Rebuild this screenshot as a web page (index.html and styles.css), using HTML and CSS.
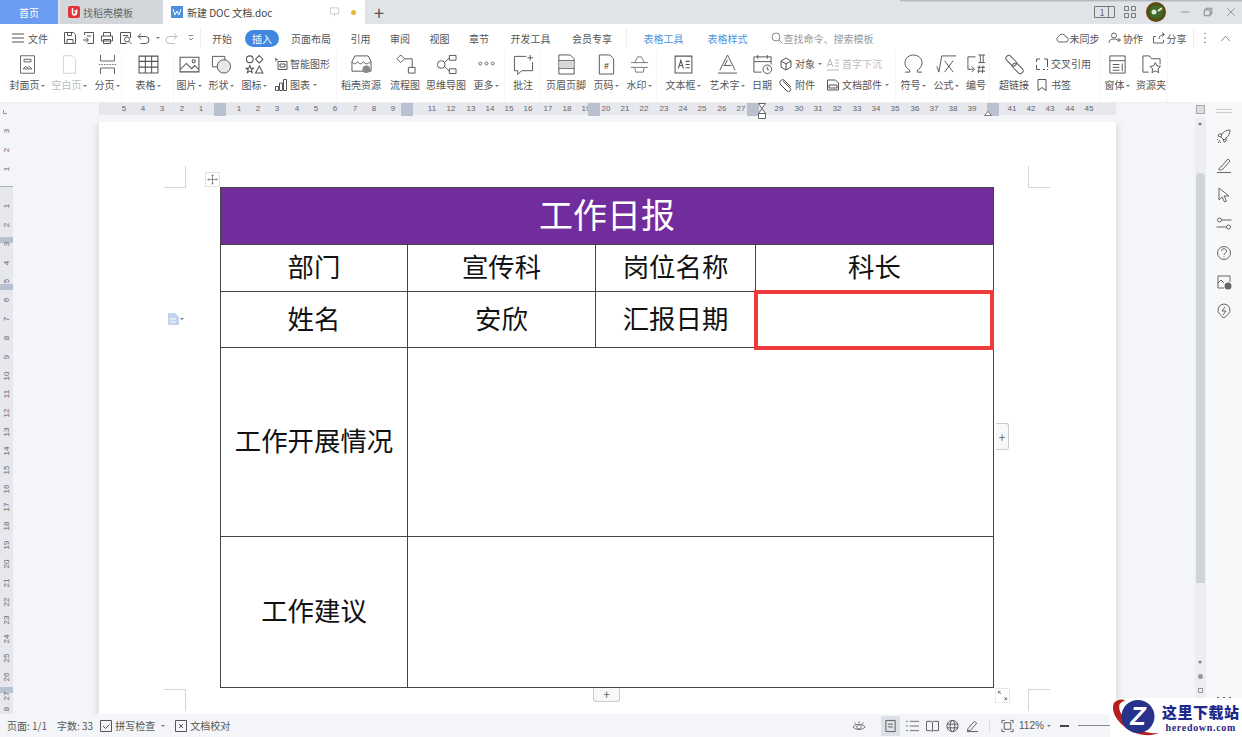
FILE: index.html
```html
<!DOCTYPE html>
<html lang="zh-CN">
<head>
    <meta charset="UTF-8">
    <title>新建 DOC 文档.doc</title>
    <link rel="stylesheet" href="styles.css">
</head>
<body>
    <div class="app">
        <header class="tabbar">
            <div class="tab tab-home">首页</div>
            <div class="tab tab-tpl">
                <svg class="tab-logo" viewBox="0 0 12 12"><rect width="12" height="12" rx="2" fill="#e5323c"/><path d="M4.5 2v5a2 2 0 1 0 2-2M8.5 3.5c.6 2-.2 4-2 5" fill="none" stroke="#fff" stroke-width="1.5"/></svg>
                找稻壳模板
            </div>
            <div class="tab tab-doc">
                <svg class="tab-logo" viewBox="0 0 12 12"><rect width="12" height="12" fill="#4a8fe0"/><path d="M2 3l2 6 2-4 2 4 2-6" fill="none" stroke="#fff" stroke-width="1"/></svg>
                <span>新建 DOC 文档.doc</span>
                <svg class="tab-screen" viewBox="0 0 12 12"><path d="M1.5 1.5h9v6.5h-9zM6 8v2.500" fill="none" stroke="#c4c8cc"/></svg>
                <i class="dot"></i>
            </div>
            <div class="tab-add">+</div>
            <div class="win">
                <svg class="win-book" viewBox="0 0 21 12"><path d="M.5.5h20v11H.5zM14.5.5v11" fill="none" stroke="#777"/><text x="8" y="10" font-size="9" fill="#666" text-anchor="middle">1</text></svg>
                <svg class="win-ico" viewBox="0 0 12 12"><path d="M.5.5h4v4h-4zM7.5.5h4v4h-4zM.5 7.5h4v4h-4zM7.5 7.5h4v4h-4z" fill="none" stroke="#777"/></svg>
                <svg class="win-avatar" viewBox="0 0 20 20"><circle cx="10" cy="10" r="10" fill="#5a4a0c"/><circle cx="10" cy="10" r="7" fill="#3d6b2c"/><circle cx="8" cy="10" r="2.5" fill="#dfe8cf"/><path d="M12 9l4-3" stroke="#e8edd8" stroke-width="2"/></svg>
                <svg class="win-ctl" viewBox="0 0 12 12"><path d="M1 6h10" stroke="#888"/></svg>
                <svg class="win-ctl" viewBox="0 0 12 12"><path d="M1.5 3.5h7v7h-7zM3.5 3.5v-2h7v7h-2" fill="none" stroke="#777"/></svg>
                <svg class="win-ctl" viewBox="0 0 12 12"><path d="M1.5 1.5l9 9M10.5 1.5l-9 9" stroke="#888"/></svg>
            </div>
            <i class="top-shadow"></i>
        </header>

        <nav class="menubar">
            <div class="menu-file">
                <svg class="mi" viewBox="0 0 12 10"><path d="M0 1h12M0 5h12M0 9h12" stroke="#555"/></svg>
                <span>文件</span>
            </div>
            <div class="quick">
                <svg viewBox="0 0 14 14"><path d="M1.5 1.5h9l2 2v9h-11zM4 12.500v-4h6v4M4.500 1.5v3h4v-3" fill="none" stroke="#555"/></svg>
                <svg viewBox="0 0 14 14"><path d="M2.500 4v-2.500h9v11h-6M1 9h5M4 6.500l2.500 2.500-2.500 2.500M5 5h4" fill="none" stroke="#555"/></svg>
                <svg viewBox="0 0 14 14"><path d="M3.500 5v-3.500h7v3.500M1.500 10v-5h11v5zM3.500 8.500h7v4h-7z" fill="none" stroke="#555"/></svg>
                <svg viewBox="0 0 14 14"><path d="M11.500 7v-5.500h-10v11h6M4 4.500h5" fill="none" stroke="#555"/><circle cx="8" cy="8.500" r="2.500" fill="none" stroke="#555"/><path d="M10 10.500l2.500 2.500" stroke="#555"/></svg>
                <svg viewBox="0 0 14 14"><path d="M1.500 5.500h7a3.500 3.500 0 0 1 0 7h-5M4 2.500l-3 3 3 3" fill="none" stroke="#555"/></svg>
                <i class="caret"></i>
                <svg viewBox="0 0 14 14"><path d="M12.500 5.500h-7a3.500 3.500 0 0 0 0 7h5M10 2.500l3 3-3 3" fill="none" stroke="#bbb"/></svg>
                <svg class="small" viewBox="0 0 10 10"><path d="M2 2h6M2.500 5l2.500 2.500 2.500-2.500" fill="none" stroke="#666"/></svg>
            </div>
            <div class="menu-items">
                <span class="mitem">开始</span>
                <span class="mitem active">插入</span>
                <span class="mitem">页面布局</span>
                <span class="mitem">引用</span>
                <span class="mitem">审阅</span>
                <span class="mitem">视图</span>
                <span class="mitem">章节</span>
                <span class="mitem wide">开发工具</span>
                <span class="mitem wide">会员专享</span>
                <i class="msep"></i>
                <span class="mitem ctx">表格工具</span>
                <span class="mitem ctx">表格样式</span>
                <span class="search">
                    <svg viewBox="0 0 12 12"><circle cx="5" cy="5" r="4" fill="none" stroke="#888"/><path d="M8 8l3.500 3.500" stroke="#888"/></svg>
                    查找命令、搜索模板
                </span>
            </div>
            <div class="menu-right">
                <span class="mr"><svg viewBox="0 0 14 12"><path d="M4 10h6.500a2.500 2.500 0 0 0 .5-5 4 4 0 0 0-7.500-.5A3 3 0 0 0 4 10z" fill="none" stroke="#666"/></svg>未同步</span>
                <span class="mr"><svg viewBox="0 0 14 12"><circle cx="6" cy="3.500" r="2.500" fill="none" stroke="#666"/><path d="M1 11c0-3 2-4 5-4s4 1 4 2M11 6v4M9 8h4" fill="none" stroke="#666"/></svg>协作</span>
                <span class="mr"><svg viewBox="0 0 14 12"><path d="M4 4.500h-2.500v6.500h10v-3M7 7c0-3 2-4.500 5-4.500M10 .5l2.500 2-2.500 2" fill="none" stroke="#666"/></svg>分享</span>
                <i class="msep right"></i>
                <svg class="mr-dots" viewBox="0 0 4 12"><path d="M2 1v1M2 5.500v1M2 10v1" stroke="#666" stroke-width="1.5"/></svg>
                <svg class="mr-up" viewBox="0 0 12 8"><path d="M1 7l5-5.500 5 5.500" fill="none" stroke="#777"/></svg>
            </div>
        </nav>

        <section class="ribbon">
            <div class="rgroup">
                <div class="rbtn w-cover"><svg viewBox="0 0 22 24"><path d="M3 2h16v20h-16zM7 6h8v3h-8zM6 17l3-3 2 2 2-2 3 3z" fill="none" stroke="#555"/></svg><span>封面页<i class="caret"></i></span></div>
                <div class="rbtn w-blank off"><svg viewBox="0 0 22 24"><path d="M4 2h10l4 4v16h-14z" fill="none" stroke="#ccc"/></svg><span>空白页<i class="caret"></i></span></div>
                <div class="rbtn w-page"><svg viewBox="0 0 22 24"><path d="M3 1v7h16v-7M3 23v-7h16v7" fill="none" stroke="#555"/><path d="M1 12h20" stroke="#777" stroke-dasharray="2 1"/></svg><span>分页<i class="caret"></i></span></div>
            </div>
            <div class="rgroup">
                <div class="rbtn w-table"><svg viewBox="0 0 20 20"><path d="M1 2h18v16h-18zM1 7h18M1 12.500h18M7 2v16M13 2v16" fill="none" stroke="#555"/></svg><span>表格<i class="caret"></i></span></div>
            </div>
            <div class="rgroup">
                <div class="rbtn w-pic"><svg viewBox="0 0 20 20"><path d="M1 3h18v14h-18zM1 15l6-6 5 5 3-3 4 4" fill="none" stroke="#555"/><circle cx="14" cy="7" r="1.5" fill="none" stroke="#555"/></svg><span>图片<i class="caret"></i></span></div>
                <div class="rbtn w-shape"><svg viewBox="0 0 22 22"><path d="M1.5 2.500h13v11h-13z" fill="none" stroke="#555"/><circle cx="13.500" cy="13" r="7" fill="#e8e8e8" stroke="#555"/></svg><span>形状<i class="caret"></i></span></div>
                <div class="rbtn w-icon"><svg viewBox="0 0 20 20"><circle cx="5.500" cy="5" r="3.200" fill="none" stroke="#555"/><path d="M14.500 1.500l3.500 3.500-3.500 3.500-3.500-3.500zM5.500 11l1 2.500h2.500l-2 1.500.8 2.700-2.300-1.500-2.300 1.500.8-2.700-2-1.500h2.500zM14.500 11.500l3.500 6.500h-7z" fill="none" stroke="#555"/></svg><span>图标<i class="caret"></i></span></div>
                <div class="rstack w-smart">
                    <div class="ritem"><svg viewBox="0 0 14 14"><path d="M1 1.500l3 1.500M2 1.500v3M4 4.500h9v8h-9zM6 7h5v3h-5z" fill="none" stroke="#555"/></svg>智能图形</div>
                    <div class="ritem"><svg viewBox="0 0 14 14"><path d="M1.5 8.500h3v4h-3zM5.500 5h3v7.500h-3zM9.500 1.500h3v11h-3z" fill="none" stroke="#555"/></svg>图表<i class="caret"></i></div>
                </div>
            </div>
            <div class="rgroup">
                <div class="rbtn w-res"><svg viewBox="0 0 22 22"><path d="M4 2h14l3 6v10h-20v-10zM1 8c2 3 4 3 6 0 2 3 4 3 6 0 2 3 4 3 8 0" fill="none" stroke="#555"/><circle cx="16" cy="16" r="4" fill="#888"/></svg><span>稻壳资源</span></div>
                <div class="rbtn w-flow"><svg viewBox="0 0 22 22"><path d="M6 1l4 4-4 4-4-4zM10 5h8v9M14 14h7v6h-7z" fill="none" stroke="#555"/></svg><span>流程图</span></div>
                <div class="rbtn w-mind"><svg viewBox="0 0 22 22"><circle cx="5.500" cy="11" r="4" fill="none" stroke="#555"/><path d="M9 9l5-5M9 13l5 5M14 1.5h7v5h-7zM14 15.500h7v5h-7z" fill="none" stroke="#555"/></svg><span>思维导图</span></div>
                <div class="rbtn w-more"><svg viewBox="0 0 22 22"><circle cx="4.500" cy="10" r="1.5" fill="none" stroke="#666"/><circle cx="11" cy="10" r="1.5" fill="none" stroke="#666"/><circle cx="17.500" cy="10" r="1.5" fill="none" stroke="#666"/></svg><span>更多<i class="caret"></i></span></div>
            </div>
            <div class="rgroup">
                <div class="rbtn w-note"><svg viewBox="0 0 22 22"><path d="M14 2.500h-12.500v15h3.500v4l4-4h11.500v-9M18 1v6M15 4h6" fill="none" stroke="#555"/></svg><span>批注</span></div>
            </div>
            <div class="rgroup">
                <div class="rbtn w-head"><svg viewBox="0 0 20 22"><path d="M2 1h12l4 4v16h-16zM2 7h16M2 15h16" fill="none" stroke="#555"/><path d="M2.500 8h15v6h-15z" fill="#d8d8d8"/></svg><span>页眉页脚</span></div>
                <div class="rbtn w-pnum"><svg viewBox="0 0 20 22"><path d="M2.500 1h11l4 4v16h-15z" fill="none" stroke="#555"/><text x="10" y="16" font-size="9" font-weight="700" fill="#555" text-anchor="middle" font-family="Liberation Sans">#</text></svg><span>页码<i class="caret"></i></span></div>
                <div class="rbtn w-mark"><svg viewBox="0 0 22 22"><path d="M2 9h18M2 14h18M6 9l3-6h4l3 6M6 14l1 5h8l1-5" fill="none" stroke="#777"/></svg><span>水印<i class="caret"></i></span></div>
            </div>
            <div class="rgroup">
                <div class="rbtn w-tbox"><svg viewBox="0 0 20 20"><path d="M2 2h16v16h-16z" fill="none" stroke="#555"/><path d="M5 14l2.500-8 2.500 8M6 11h3M12 7h4M12 10h4M12 13h4" fill="none" stroke="#555"/></svg><span>文本框<i class="caret"></i></span></div>
                <div class="rbtn w-art"><svg viewBox="0 0 22 22"><path d="M3 17l8-16 8 16M7 12h8M1 20h20M11 6l-3 6" fill="none" stroke="#555"/></svg><span>艺术字<i class="caret"></i></span></div>
                <div class="rbtn w-date"><svg viewBox="0 0 22 22"><path d="M10 19h-8v-16h18v8M2 8h18M6 1v4M16 1v4M16 13.500v3h2" fill="none" stroke="#555"/><circle cx="16" cy="16" r="4.500" fill="none" stroke="#555"/></svg><span>日期</span></div>
                <div class="rstack w-obj">
                    <div class="ritem"><svg viewBox="0 0 14 14"><path d="M7 1l5 3v6l-5 3-5-3v-6zM2 4l5 3 5-3M7 7v6" fill="none" stroke="#555"/></svg>对象<i class="caret"></i></div>
                    <div class="ritem"><svg viewBox="0 0 14 14"><path d="M4 3l7 7a2 2 0 0 1-3 3l-7-7a3 3 0 0 1 4-4l7 7" fill="none" stroke="#555"/></svg>附件</div>
                </div>
                <div class="rstack w-drop">
                    <div class="ritem off"><svg viewBox="0 0 14 14"><path d="M1 10l3-8 3 8M2 7.500h4M1 13h12M9 3h4M9 6h4M9 9h4" fill="none" stroke="#bbb"/></svg>首字下沉</div>
                    <div class="ritem"><svg viewBox="0 0 14 14"><path d="M1.5 2h8l3 3v7h-11zM3 7h8v3h-8z" fill="none" stroke="#555"/></svg>文档部件<i class="caret"></i></div>
                </div>
            </div>
            <div class="rgroup">
                <div class="rbtn w-sym"><svg viewBox="0 0 22 22"><path d="M2 19h5v-2c-3-2-5-4-5-8a9 8 0 0 1 18 0c0 4-2 6-5 8v2h5" fill="none" stroke="#555"/></svg><span>符号<i class="caret"></i></span></div>
                <div class="rbtn w-for"><svg viewBox="0 0 22 22"><path d="M1 13l2 6 3-17h15M9 7l9 12M18 7l-9 12" fill="none" stroke="#555"/></svg><span>公式<i class="caret"></i></span></div>
                <div class="rbtn w-num"><svg viewBox="0 0 22 22"><path d="M2 3h8M2 3v13h6M6 13l3 3-3 3M13 1h7M13 9h7M15 1v8M18 1v8M14 12l-1 8M18 12l-1 8M12 14h8M12 18h8" fill="none" stroke="#555"/></svg><span>编号</span></div>
            </div>
            <div class="rgroup">
                <div class="rbtn w-link"><svg viewBox="0 0 22 22"><rect x="1" y="4" width="13" height="6" rx="3" transform="rotate(45 7.500 7)" fill="none" stroke="#555"/><rect x="8" y="12" width="13" height="6" rx="3" transform="rotate(45 14.500 15)" fill="none" stroke="#555"/></svg><span>超链接</span></div>
                <div class="rstack w-ref">
                    <div class="ritem"><svg viewBox="0 0 14 14"><path d="M5 2h-3.500v3M1.5 8v4.500h3.500M9 2h3.500v8M8 12.500h2M12 12.500h1" fill="none" stroke="#555"/></svg>交叉引用</div>
                    <div class="ritem"><svg viewBox="0 0 14 14"><path d="M3 1.5h8v11l-4-3-4 3z" fill="none" stroke="#555"/></svg>书签</div>
                </div>
            </div>
            <div class="rgroup">
                <div class="rbtn w-win"><svg viewBox="0 0 20 22"><path d="M2 2h16v18h-16zM2 7h16M5 11h7M5 14h7M5 17h7M15 10v8" fill="none" stroke="#555"/></svg><span>窗体<i class="caret"></i></span></div>
                <div class="rbtn w-folder"><svg viewBox="0 0 22 22"><path d="M8 19h-6v-17h7l2 3h9v6" fill="none" stroke="#555"/><path d="M15 9l1.800 3.500 3.700.5-2.700 2.700.7 3.800-3.500-1.800-3.500 1.800.7-3.800-2.700-2.700 3.700-.5z" fill="none" stroke="#555"/></svg><span>资源夹</span></div>
            </div>
        </section>

        <div class="main-row">
            <div class="doc-col">
                <div class="hruler">
                    <span class="corner"></span>
                    <div class="ticks" id="hticks"></div>
                    <svg class="indent" viewBox="0 0 10 16"><path d="M1.500.5h7l-3.500 5zM5 5.500l-3.500 5h7zM1.500 10.500h7v5h-7z" fill="#fff" stroke="#666"/></svg>
                    <svg class="indent-r" viewBox="0 0 8 5"><path d="M4 .5l3.500 4h-7z" fill="#fff" stroke="#777"/></svg>
                </div>
                <main class="workspace">
                    <div class="vruler" id="vticks">
                        <i class="vmark vm1"></i>
                        <i class="vmark vm2"></i>
                        <i class="vmark vm3"></i>
                    </div>
                    <div class="canvas">
                        <div class="page">
                            <i class="crop crop-tl"></i>
                            <i class="crop crop-tr"></i>
                            <i class="crop crop-bl"></i>
                            <i class="crop crop-br"></i>
                            <span class="handle-move">
                                <svg viewBox="0 0 14 14"><path d="M7 1v12M1 7h12M5.500 2.500l1.500-1.500 1.500 1.500M5.500 11.500l1.500 1.500 1.500-1.500M2.500 5.500l-1.500 1.500 1.500 1.500M11.500 5.500l1.500 1.500-1.500 1.500" fill="none" stroke="#777"/></svg>
                            </span>
                            <table class="report">
                                <colgroup>
                                    <col class="c1"><col class="c2"><col class="c3"><col class="c4">
                                </colgroup>
                                <tr class="r-title"><td colspan="4">工作日报</td></tr>
                                <tr class="r-dept">
                                    <td>部门</td><td>宣传科</td><td>岗位名称</td><td>科长</td>
                                </tr>
                                <tr class="r-name">
                                    <td>姓名</td><td>安欣</td><td>汇报日期</td><td class="picked"></td>
                                </tr>
                                <tr class="r-work"><td>工作开展情况</td><td colspan="3"></td></tr>
                                <tr class="r-adv"><td>工作建议</td><td colspan="3"></td></tr>
                            </table>
                            <span class="handle-side">+</span>
                            <span class="handle-bottom">+</span>
                            <span class="handle-size">
                                <svg viewBox="0 0 12 12"><path d="M1.5 1.5l3 3M1.5 1.5v2.500M1.5 1.5h2.500M10.500 10.500l-3-3M10.500 10.500v-2.500M10.500 10.500h-2.500" fill="none" stroke="#777"/></svg>
                            </span>
                            <span class="para-mark">
                                <svg viewBox="0 0 11 12"><path d="M0 0h7l4 4v8h-11z" fill="#c3d3ec"/><path d="M2 6h6M2 9h6" stroke="#fff"/></svg>
                                <i class="caret"></i>
                            </span>
                        </div>
                    </div>
                </main>
            </div>
            <div class="vscroll">
                <span class="sbtn"></span>
                <span class="arrow"></span>
                <span class="thumb"></span>
                <span class="arrow down"></span>
                <span class="sb-dot"></span>
                <span class="sb-square"></span>
            </div>
            <aside class="sidebar">
                <i class="grip"></i>
                <svg viewBox="0 0 16 16"><path d="M6 5c2-3 5-4 8-4 0 3-1 6-4 8l-2 2-3-3zM6 5h-3l-1 2 3 1M10 9v3l-2 1-1-3M4 11l-2 3M2 10l-1 1M5 13l-1 1" fill="none" stroke="#666"/></svg>
                <svg viewBox="0 0 16 16"><path d="M1 14.500h14M3 12c0-2 1-3 2-3l7-8 2 2-7 8c-1 1-2 1-4 1z" fill="none" stroke="#666"/></svg>
                <svg viewBox="0 0 16 16"><path d="M3 1l10 8h-5l2.500 5-2 1-2.500-5-3 3z" fill="none" stroke="#666"/></svg>
                <svg viewBox="0 0 16 16"><circle cx="3.500" cy="4" r="2" fill="none" stroke="#666"/><path d="M5.500 4h10M.5 11h10" stroke="#666"/><circle cx="12.500" cy="11" r="2" fill="none" stroke="#666"/></svg>
                <svg viewBox="0 0 16 16"><circle cx="8" cy="8" r="6.500" fill="none" stroke="#666"/><path d="M5.500 6c0-3 5-3 5 0 0 2-2.500 2-2.500 4M8 11.500v1" fill="none" stroke="#666"/></svg>
                <svg viewBox="0 0 16 16"><path d="M2 2h12v6M2 2v12h6M2 9l3-3 3 3" fill="none" stroke="#666"/><circle cx="12" cy="12" r="3.500" fill="#666"/></svg>
                <svg viewBox="0 0 16 16"><path d="M8 1a6 6 0 0 1 4 10.500l-4 3.500-4-3.500a6 6 0 0 1 4-10.500zM9 4l-3 4h4l-3 4" fill="none" stroke="#666"/></svg>
                <svg class="side-more" viewBox="0 0 16 4"><path d="M2 1v2M8 1v2M14 1v2" stroke="#666" stroke-width="2"/></svg>
            </aside>
        </div>

        <footer class="status">
            <span class="st">页面: 1/1</span>
            <span class="st st-count">字数: 33</span>
            <span class="st st-box">
                <svg viewBox="0 0 12 12"><path d="M.5.5h11v11h-11zM3 6l2.500 2.500 4-4" fill="none" stroke="#555"/></svg>
                拼写检查<i class="caret"></i>
            </span>
            <span class="st st-box">
                <svg viewBox="0 0 12 12"><path d="M.5.5h11v11h-11zM4 4l4 4M8 4l-4 4" fill="none" stroke="#555"/></svg>
                文档校对
            </span>
            <div class="st-right">
                <svg class="si eye" viewBox="0 0 16 14"><path d="M1 8c3-4 11-4 14 0-3 4-11 4-14 0zM3 3l1.500 2M8 1.5v2M13 3l-1.500 2" fill="none" stroke="#666"/><circle cx="8" cy="8" r="2.500" fill="none" stroke="#666"/></svg>
                <span class="view-on"><svg class="si" viewBox="0 0 14 14"><path d="M2 1h10v12h-10zM4.500 5h5M4.500 8h5" fill="none" stroke="#555"/></svg></span>
                <svg class="si" viewBox="0 0 14 14"><path d="M4 2h10M4 7h10M4 12h10M0 2h2M0 7h2M0 12h2" stroke="#666"/></svg>
                <svg class="si" viewBox="0 0 14 14"><path d="M.5 2h5.500l1 1 1-1h5.500v10h-5.500l-1 1-1-1h-5.500zM7 3v9" fill="none" stroke="#555"/></svg>
                <svg class="si" viewBox="0 0 14 14"><circle cx="7" cy="7" r="6" fill="none" stroke="#555"/><ellipse cx="7" cy="7" rx="2.500" ry="6" fill="none" stroke="#555"/><path d="M1 5h12M1 9h12" stroke="#555"/></svg>
                <svg class="si" viewBox="0 0 14 14"><path d="M1 13h12M2 10l7-8 2.500 2-7 8h-3z" fill="none" stroke="#555"/></svg>
                <i class="st-sep"></i>
                <svg class="si" viewBox="0 0 14 14"><path d="M1 4v-3h3M10 1h3v3M13 10v3h-3M4 13h-3v-3M3.500 3.500h7v7h-7z" fill="none" stroke="#555"/></svg>
                <span class="zoom-val">112%<i class="caret"></i></span>
                <i class="minus"></i>
                <i class="slider"></i>
            </div>
        </footer>

        <div class="watermark">
            <svg viewBox="0 0 52 40"><path d="M3 6c-3 10 6 22 20 29 10 4 20 4 26 1-13 1-27-5-35-15-4-5-6-10-5-14 1-2 3-4 6-4-4-3-10-1-12 3z" fill="#b3201f"/><circle cx="28" cy="19" r="17" fill="#26328c"/><text x="28" y="28" font-size="26" font-weight="700" font-style="italic" fill="#fff" text-anchor="middle" font-family="Liberation Sans">Z</text></svg>
            <div class="wm-text">
                <b>这里下载站</b>
                <span>heredown.com</span>
            </div>
        </div>
    </div>

    <script>
        // ruler numbers
        const hticks = document.getElementById('hticks');
        const hnums = [5, 4, 3, 2, 1, '', 1, 2, 3, 4, 5, 6, 7, 8, 9, '', 11, 12, 13, 14, 15, 16, 17, 18, 19, '', 20, 21, 22, 23, 24, 25, 26, 27, '', 29, 30, 31, 32, 33, 34, 35, 36, 37, 38, 39, '', 41, 42, 43, 44, 45];
        const hpos = [124, 143, 162, 182, 201, 220, 239, 258, 277, 297, 316, 335, 355, 374, 393, 407, 432, 451, 471, 490, 509, 528, 548, 567, 586, 594, 606, 625, 644, 664, 683, 702, 722, 741, 753, 779, 799, 818, 837, 857, 876, 895, 915, 934, 953, 972, 993, 1012, 1031, 1050, 1070, 1089];
        hnums.forEach((n, i) => {
            const t = document.createElement('span');
            t.className = n === '' ? 'tick mark' : 'tick';
            t.textContent = n;
            t.style.left = (hpos[i] - 105) + 'px';
            hticks.appendChild(t);
        });

        const vticks = document.getElementById('vticks');
        const vnums = [3, 2, 1, 1, 2, 3, 4, 5, 6, 7, 8, 9, 10, 11, 12, 13, 14, 15, 16, 17, 18, 19, 20, 21, 22, 23, 24, 25, 26, 27, 8];
        vnums.forEach((n, i) => {
            const t = document.createElement('span');
            t.className = 'vtick';
            t.textContent = n;
            let top = 4 + i * 19;
            if (i > 2) top = 79 + (i - 3) * 18.84;
            if (i === 30) top = 582;
            t.style.top = top + 'px';
            vticks.appendChild(t);
        });
    </script>
</body>
</html>
```

FILE: styles.css
```css
* {
    box-sizing: border-box;
}

html, body {
    margin: 0;
    padding: 0;
    height: 100%;
    overflow: hidden;
}

body {
    font-family: "Noto Sans CJK SC", "Liberation Sans", sans-serif;
    font-size: 10px;
    color: #555;
    background: #f3f5f8;
}

svg {
    display: block;
    flex: none;
}

.app {
    position: relative;
    width: 1242px;
    height: 737px;
    display: flex;
    flex-direction: column;
    overflow: hidden;
}

.caret {
    display: inline-block;
    width: 0;
    height: 0;
    margin-left: 1px;
    vertical-align: middle;
    border-left: 2px solid transparent;
    border-right: 2px solid transparent;
    border-top: 2px solid #777;
}

/* tab bar */
.tabbar {
    position: relative;
    display: flex;
    height: 24px;
    flex: none;
    background: #e0e3e8;
}

.top-shadow {
    position: absolute;
    left: 900px;
    right: 0;
    top: 0;
    height: 2px;
    background: linear-gradient(#a9abaf, #dcdfe3);
}

.tab {
    display: flex;
    align-items: center;
    height: 24px;
}

.tab-home {
    width: 58px;
    justify-content: center;
    background: #6a9cf2;
    color: #fff;
}

.tab-tpl {
    width: 103px;
    gap: 3px;
    padding-left: 8px;
    margin-left: 2px;
    background: #d3d6da;
    color: #666;
}

.tab-logo {
    width: 12px;
    height: 12px;
}

.tab-doc {
    width: 202px;
    gap: 4px;
    padding-left: 8px;
    background: #fff;
    color: #444;
}

.tab-screen {
    width: 11px;
    height: 12px;
    margin-left: 53px;
}

.dot {
    width: 5px;
    height: 5px;
    margin-left: 7px;
    border-radius: 50%;
    background: #f0b63c;
}

.tab-add {
    width: 28px;
    text-align: center;
    font-size: 18px;
    line-height: 24px;
    color: #555;
}

.win {
    display: flex;
    align-items: center;
    margin-left: auto;
    padding-right: 6px;
}

.win-book {
    width: 21px;
    height: 12px;
    margin-right: 9px;
}

.win-ico {
    width: 12px;
    height: 12px;
    margin-right: 10px;
}

.win-avatar {
    width: 20px;
    height: 20px;
    margin-right: 14px;
}

.win-ctl {
    width: 10px;
    height: 10px;
    margin-right: 13px;
}

.win-ctl:last-child {
    margin-right: 0;
}

/* menu row */
.menubar {
    display: flex;
    align-items: center;
    height: 28px;
    flex: none;
    background: #fff;
}

.menu-file {
    display: flex;
    align-items: center;
    gap: 4px;
    width: 62px;
    padding-left: 12px;
}

.mi {
    width: 12px;
    height: 10px;
}

.quick {
    display: flex;
    align-items: center;
    gap: 4.5px;
    width: 139px;
    height: 20px;
    padding-left: 1px;
    margin-right: 11px;
    border-right: 1px solid #eee;
}

.quick svg {
    width: 14px;
    height: 14px;
}

.quick .caret {
    margin-left: 0;
}

.quick .small {
    width: 8px;
    height: 8px;
    margin-left: 4px;
}

.menu-items {
    display: flex;
    align-items: center;
    flex: 1;
}

.mitem {
    margin-right: 19.5px;
    white-space: nowrap;
}

.mitem.active {
    width: 34px;
    height: 17px;
    line-height: 17px;
    margin: 0 12px 0 -6.5px;
    text-align: center;
    border-radius: 9px;
    background: #3f87e0;
    color: #fff;
}

.mitem.wide {
    margin-left: 2px;
}

.msep {
    width: 1px;
    height: 20px;
    margin: 0 17px 0 -6px;
    background: #eee;
}

.msep.right {
    margin: 0 0 0 -2px;
}

.mitem.ctx {
    margin-right: 24px;
    color: #4d94e0;
}

.search {
    display: flex;
    align-items: center;
    gap: 1px;
    margin-left: -1px;
    color: #999;
}

.search svg {
    width: 12px;
    height: 12px;
}

.menu-right {
    display: flex;
    align-items: center;
    padding-right: 11px;
}

.mr {
    display: flex;
    align-items: center;
    gap: 1px;
    margin-right: 8.5px;
}

.mr svg {
    width: 14px;
    height: 12px;
}

.mr-dots {
    width: 4px;
    height: 12px;
    margin: 0 13px 0 9px;
}

.mr-up {
    width: 11px;
    height: 7px;
}

/* ribbon */
.ribbon {
    display: flex;
    height: 50px;
    flex: none;
    padding-left: 8px;
    background: #fff;
}

.rgroup {
    display: flex;
    box-shadow: inset -1px 0 0 #f7f7f7;
}

.rbtn {
    display: flex;
    flex-direction: column;
    align-items: center;
    height: 50px;
    padding-top: 2px;
    white-space: nowrap;
}

.rbtn svg {
    width: 21px;
    height: 21px;
    margin-bottom: 2px;
}

.rbtn span {
    line-height: 15px;
}

.off,
.off span {
    color: #bbb;
}

.rstack {
    display: flex;
    flex-direction: column;
    gap: 6px;
    padding-top: 4px;
}

.ritem {
    display: flex;
    align-items: center;
    gap: 2px;
    height: 15px;
    white-space: nowrap;
}

.ritem svg {
    width: 14px;
    height: 14px;
}

.w-cover { width: 38px; }
.w-blank { width: 46px; }
.w-page { width: 30px; }
.w-table { width: 52px; }
.w-pic { width: 30px; }
.w-shape { width: 34px; }
.w-icon { width: 32px; }
.w-smart { width: 67px; padding-left: 4px; }
.w-res { width: 48px; }
.w-flow { width: 40px; }
.w-mind { width: 42px; }
.w-more { width: 38px; }
.w-note { width: 36px; }
.w-head { width: 50px; }
.w-pnum { width: 30px; }
.w-mark { width: 36px; }
.w-tbox { width: 52px; }
.w-art { width: 36px; }
.w-date { width: 34px; }
.w-obj { width: 47px; }
.w-drop { width: 70px; }
.w-sym { width: 34px; }
.w-for { width: 32px; }
.w-num { width: 28px; }
.w-link { width: 48px; }
.w-ref { width: 65px; margin-left: -3px; }
.w-win { width: 34px; }
.w-folder { width: 34px; }

/* rulers */
.main-row {
    flex: 1;
    display: flex;
    min-height: 0;
}

.doc-col {
    width: 1195px;
    flex: none;
    display: flex;
    flex-direction: column;
}

.hruler {
    position: relative;
    height: 20px;
    flex: none;
    background: #f3f5f8;
    border-top: 1px solid #eceef0;
}

.corner {
    position: absolute;
    left: 3px;
    top: 7px;
    width: 4px;
    height: 4px;
    border-left: 1px solid #999;
    border-bottom: 1px solid #999;
}

.ticks {
    position: relative;
    width: 1017px;
    height: 12px;
    margin-left: 99px;
    background: #e6e8ed;
}

.tick {
    position: absolute;
    top: 0;
    width: 12px;
    text-align: center;
    font-family: "Liberation Sans", sans-serif;
    font-size: 8px;
    line-height: 12px;
    color: #666;
}

.tick.mark {
    height: 13px;
    background: #b9c1d0;
}

.indent {
    position: absolute;
    left: 757px;
    top: 0;
    width: 10px;
    height: 16px;
}

.indent-r {
    position: absolute;
    left: 984px;
    top: 8px;
    width: 8px;
    height: 5px;
}

.workspace {
    flex: 1;
    display: flex;
    min-height: 0;
}

.vruler {
    position: relative;
    width: 13px;
    flex: none;
    background: linear-gradient(#f3f5f8 0 64px, #aab0ba 64px 65px, #e6e8ed 65px);
    overflow: hidden;
}

.vtick {
    position: absolute;
    left: 0;
    width: 13px;
    text-align: center;
    font-family: "Liberation Sans", sans-serif;
    font-size: 8px;
    line-height: 10px;
    color: #666;
    transform: rotate(-90deg);
}

.vmark {
    position: absolute;
    left: 0;
    width: 13px;
    height: 6px;
    background: #b9c1d0;
}

.vm1 { top: 115px; }
.vm2 { top: 162px; }
.vm3 { top: 565px; }

/* document */
.canvas {
    flex: 1;
    padding-left: 86px;
    overflow: hidden;
    background: #f3f5f8;
}

.page {
    position: relative;
    width: 1017px;
    height: 600px;
    padding: 65px 0 0 121px;
    background: #fff;
    box-shadow: -4px 0 6px -2px #d8dadd, 4px 0 6px -2px #d8dadd;
}

.report {
    width: 773px;
    table-layout: fixed;
    border-collapse: collapse;
    font-size: 26.4px;
    color: #111;
}

.report td {
    padding: 0 0 5px;
    text-align: center;
    border: 1px solid #444;
}

.c1 { width: 187px; }
.c2 { width: 188px; }
.c3 { width: 160px; }
.c4 { width: 238px; }

.r-title td {
    height: 57px;
    font-size: 34px;
    color: #fff;
    background: #722d9d;
}

.r-dept td { height: 47px; }
.r-name td { height: 56px; }
.r-work td { height: 189px; }
.r-adv td { height: 151px; }

.report td.picked {
    position: relative;
}

.picked::after {
    content: "";
    position: absolute;
    left: -2px;
    right: -1px;
    top: -2px;
    bottom: -3px;
    border: 4px solid #ee3b3b;
}

.crop {
    position: absolute;
    width: 22px;
    height: 22px;
    border: 0 solid #d5d5d5;
}

.crop-tl { left: 65px; top: 44px; border-width: 0 1px 1px 0; }
.crop-tr { left: 929px; top: 44px; border-width: 0 0 1px 1px; }
.crop-bl { left: 65px; top: 567px; border-width: 1px 1px 0 0; }
.crop-br { left: 929px; top: 567px; border-width: 1px 0 0 1px; }

.handle-move {
    position: absolute;
    left: 106px;
    top: 50px;
    width: 15px;
    height: 15px;
    padding: 1px;
    background: #fff;
    border: 1px solid #e3e3e3;
}

.handle-side {
    position: absolute;
    left: 897px;
    top: 301px;
    width: 13px;
    height: 27px;
    text-align: center;
    line-height: 25px;
    font-size: 12px;
    color: #666;
    background: #f8f8f8;
    border: 1px solid #ccc;
    border-left: 0;
    border-radius: 0 3px 3px 0;
}

.handle-bottom {
    position: absolute;
    left: 494px;
    top: 566px;
    width: 27px;
    height: 14px;
    text-align: center;
    line-height: 12px;
    font-size: 12px;
    color: #666;
    background: #f8f8f8;
    border: 1px solid #ccc;
    border-top: 0;
    border-radius: 0 0 3px 3px;
}

.handle-size {
    position: absolute;
    left: 896px;
    top: 566px;
    width: 15px;
    height: 15px;
    padding: 1px;
    background: #fff;
    border: 1px solid #e8e8e8;
}

.para-mark {
    position: absolute;
    left: 69px;
    top: 191px;
    display: flex;
    align-items: center;
}

.para-mark svg {
    width: 11px;
    height: 12px;
}

/* scrollbar and side panel */
.vscroll {
    position: relative;
    width: 11px;
    flex: none;
    background: linear-gradient(#f3f5f8 0 15px, #eceef2 15px);
}

.vscroll span {
    position: absolute;
}

.sbtn {
    left: 1px;
    top: 3px;
    width: 9px;
    height: 9px;
    border: 1px solid #aaa;
    background: #ddd;
}

.arrow {
    left: 3px;
    top: 20px;
    border-left: 2px solid transparent;
    border-right: 2px solid transparent;
    border-bottom: 3px solid #777;
}

.arrow.down {
    top: 559px;
    border-bottom: 0;
    border-top: 3px solid #777;
}

.thumb {
    left: 1px;
    top: 71px;
    width: 9px;
    height: 410px;
    border-radius: 4px 4px 0 0;
    background: #d0d3d8;
}

.sb-dot {
    left: 3px;
    top: 572px;
    width: 5px;
    height: 5px;
    background: #999;
    border-radius: 50%;
}

.sb-square {
    left: 3px;
    top: 586px;
    width: 5px;
    height: 5px;
    border: 1px solid #999;
}

.sidebar {
    flex: 1;
    display: flex;
    flex-direction: column;
    align-items: center;
    gap: 13px;
    background: #f6f8fa;
}

.sidebar svg {
    width: 16px;
    height: 16px;
}

.grip {
    width: 16px;
    height: 4px;
    margin-top: 7px;
    margin-bottom: 3px;
    border-top: 1px solid #ccc;
    border-bottom: 1px solid #ccc;
}

.sidebar .side-more {
    height: 4px;
    margin-top: auto;
    margin-bottom: 14px;
}

/* status bar */
.status {
    display: flex;
    align-items: center;
    height: 23px;
    flex: none;
    padding-left: 7px;
    background: #f3f5f8;
}

.st {
    display: flex;
    align-items: center;
    white-space: nowrap;
}

.st-count {
    margin-left: 10px;
}

.st-box {
    gap: 3px;
    margin-left: 7px;
}

.st-box + .st-box {
    margin-left: 10px;
}

.st-box svg {
    width: 12px;
    height: 12px;
}

.st-box .caret {
    margin-left: 3px;
}

.st-right {
    display: flex;
    align-items: center;
    gap: 7px;
    margin-left: auto;
    width: 390px;
}

.si {
    width: 13px;
    height: 14px;
}

.si.eye {
    width: 14px;
}

.view-on {
    padding: 3px;
    margin: 0 -1px 0 8px;
    background: #dde1e7;
}

.st-sep {
    width: 1px;
    height: 14px;
    margin: 0 4px 0 3px;
    background: #ddd;
}

.zoom-val {
    white-space: nowrap;
    font-family: "Liberation Sans", sans-serif;
    font-size: 10px;
    margin-left: -2px;
}

.zoom-val .caret {
    margin-left: 3px;
}

.minus {
    width: 9px;
    height: 2px;
    margin-left: 2px;
    background: #444;
}

.slider {
    flex: 1;
    height: 1px;
    margin-left: 2px;
    background: #888;
}

/* site watermark over the corner */
.watermark {
    position: absolute;
    right: 0;
    bottom: 0;
    width: 132px;
    height: 39px;
    display: flex;
    background: #fff;
    border-radius: 12px 0 0 0;
}

.watermark svg {
    width: 52px;
    height: 39px;
}

.wm-text {
    display: flex;
    flex-direction: column;
    align-items: center;
    padding-top: 6px;
    color: #1e2a8a;
    font-family: "Liberation Serif", "Noto Sans CJK SC", serif;
    line-height: 1;
    white-space: nowrap;
}

.wm-text b {
    font-family: "Noto Sans CJK SC", serif;
    font-size: 15px;
    font-weight: 900;
    letter-spacing: .5px;
}

.wm-text span {
    margin-top: 4px;
    font-size: 10px;
    font-weight: 700;
    letter-spacing: .7px;
}
```
